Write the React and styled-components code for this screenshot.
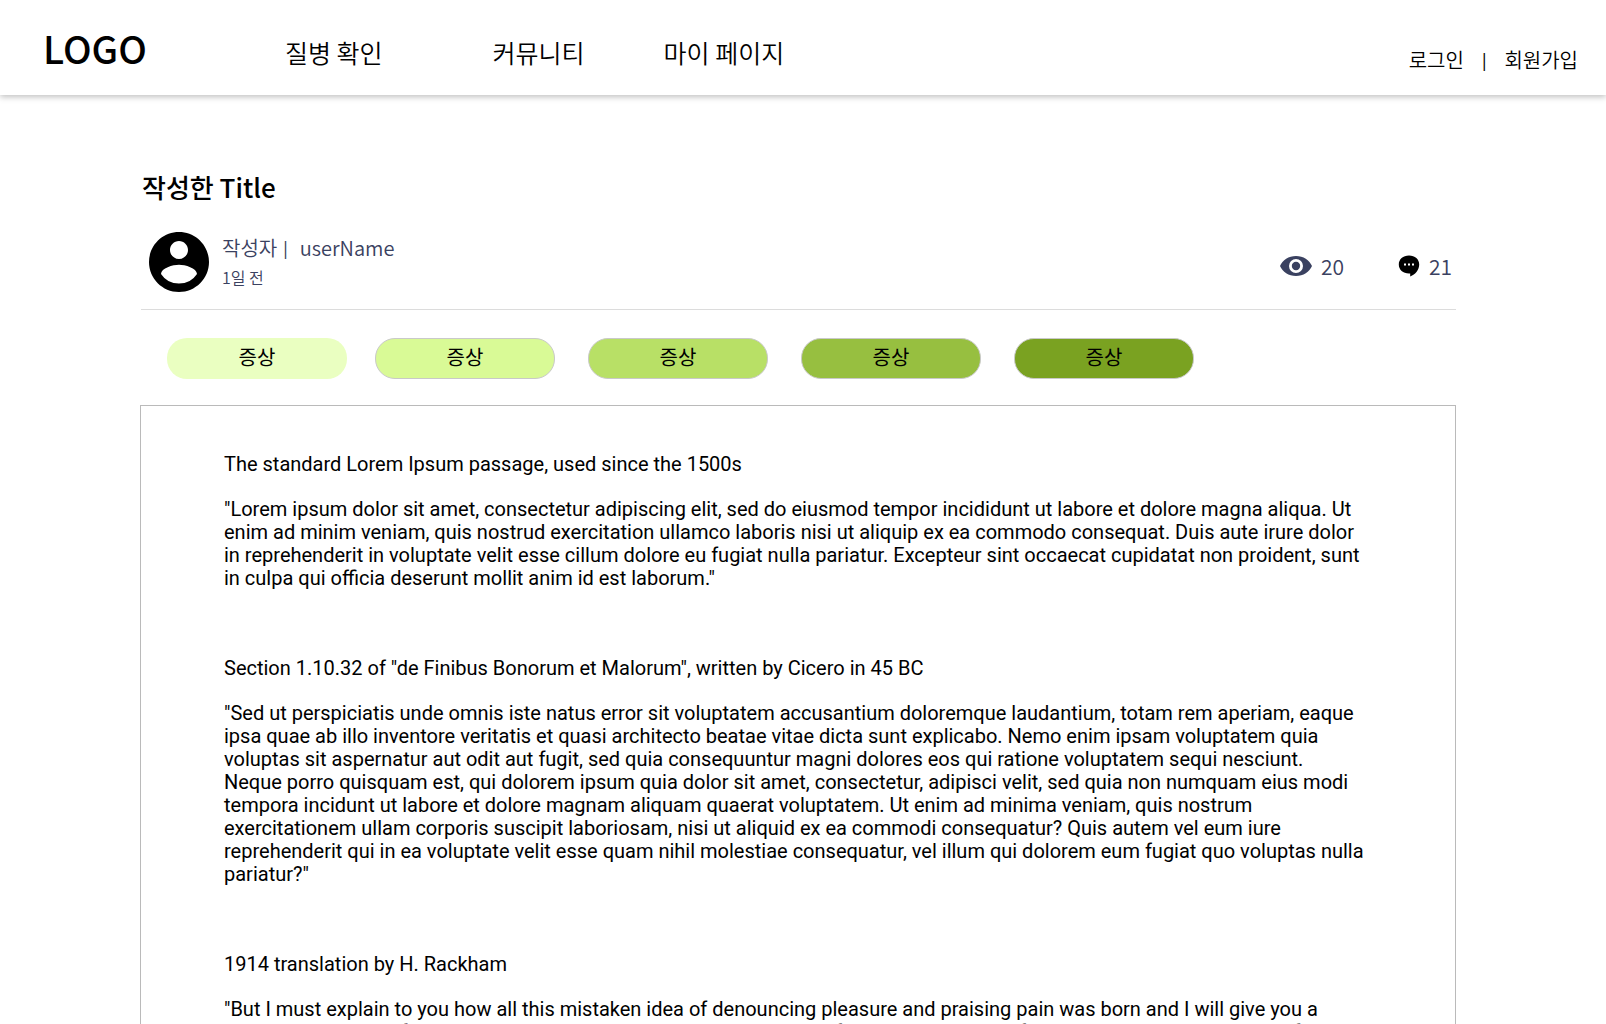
import React from "react";
import styled, { createGlobalStyle } from "styled-components";

const GlobalStyle = createGlobalStyle`
  *, *::before, *::after { box-sizing: border-box; }
  body {
    margin: 0;
    background: #fff;
    color: #000;
    font-family: "Noto Sans CJK KR", sans-serif;
    font-size: 20px;
  }
`;

const Header = styled.header`
  display: flex;
  align-items: center;
  height: 95px;
  padding: 0 28px 0 43px;
  background: #fff;
  box-shadow: 0 2px 6px rgba(0, 0, 0, 0.25);
`;

const Logo = styled.a`
  width: 242px;
  color: inherit;
  font-size: 38px;
  font-weight: 500;
  line-height: 40px;
  text-decoration: none;
`;

const Nav = styled.nav`
  display: flex;
  flex: 1;
  padding-top: 8px;
`;

const NavLink = styled.a`
  margin-right: ${(p) => p.$gap}px;
  color: inherit;
  font-size: 25px;
  font-weight: 350;
  line-height: 36px;
  text-decoration: none;
`;

const Account = styled.div`
  display: flex;
  gap: 18px;
  padding-top: 24px;
  font-weight: 350;
  line-height: 28px;
`;

const AccountLink = styled.a`
  color: inherit;
  text-decoration: none;
`;

const Divider = styled.span`
  font-size: 16px;
  font-weight: 500;
`;

const Page = styled.main`
  padding: 72px 150px 0 140px;
`;

const Title = styled.h1`
  margin: 0;
  padding-left: 2px;
  font-size: 26px;
  font-weight: 500;
  line-height: 40px;
`;

const Meta = styled.div`
  display: flex;
  align-items: center;
  height: 103px;
  margin-left: 1px;
  padding: 8px 4px 0 8px;
  border-bottom: 1px solid #dcdcdc;
  color: #3a4160;
  font-weight: 350;
`;

const Avatar = styled.svg`
  width: 60px;
  height: 60px;
  color: #000;
`;

const Byline = styled.div`
  flex: 1;
  padding-left: 13px;
`;

const Author = styled.div`
  display: flex;
  gap: 6px;
  line-height: 30px;
`;

const UserName = styled.span`
  padding-left: 6px;
`;

const Time = styled.time`
  display: block;
  font-size: 16px;
  line-height: 28px;
`;

const Stats = styled.div`
  display: flex;
  gap: 54px;
  padding-top: 8px;
  font-size: 21px;
`;

const Stat = styled.span`
  display: flex;
  align-items: center;
  gap: 9px;
  line-height: 30px;
`;

const Tags = styled.div`
  display: flex;
  padding: 28px 0 26px 27px;
`;

const Tag = styled.button`
  width: 180px;
  height: 41px;
  margin-right: ${(p) => (p.$plain ? 28 : 33)}px;
  padding: 0 0 4px;
  border: ${(p) => (p.$plain ? "0" : "1px solid #c9c9c9")};
  border-radius: 20px;
  background: ${(p) => p.$color};
  color: #000;
  font: inherit;
  line-height: 30px;
`;

const Article = styled.article`
  padding: 47px 90px 44px 83px;
  border: 1px solid #bababa;
  font-family: Roboto, sans-serif;
  line-height: 23px;
`;

const Passage = styled.section`
  margin-bottom: 67px;
`;

const Heading = styled.h2`
  margin: 0 0 22px;
  font-size: 20px;
  font-weight: 400;
`;

const Text = styled.p`
  margin: 0;
`;

const tags = [
  { color: "#eaffc1", plain: true },
  { color: "#d9fa96" },
  { color: "#b8e066" },
  { color: "#97bf40" },
  { color: "#7aa221" },
];

const passages = [
  {
    heading: "The standard Lorem Ipsum passage, used since the 1500s",
    text: '"Lorem ipsum dolor sit amet, consectetur adipiscing elit, sed do eiusmod tempor incididunt ut labore et dolore magna aliqua. Ut enim ad minim veniam, quis nostrud exercitation ullamco laboris nisi ut aliquip ex ea commodo consequat. Duis aute irure dolor in reprehenderit in voluptate velit esse cillum dolore eu fugiat nulla pariatur. Excepteur sint occaecat cupidatat non proident, sunt in culpa qui officia deserunt mollit anim id est laborum."',
  },
  {
    heading: 'Section 1.10.32 of "de Finibus Bonorum et Malorum", written by Cicero in 45 BC',
    text: '"Sed ut perspiciatis unde omnis iste natus error sit voluptatem accusantium doloremque laudantium, totam rem aperiam, eaque ipsa quae ab illo inventore veritatis et quasi architecto beatae vitae dicta sunt explicabo. Nemo enim ipsam voluptatem quia voluptas sit aspernatur aut odit aut fugit, sed quia consequuntur magni dolores eos qui ratione voluptatem sequi nesciunt. Neque porro quisquam est, qui dolorem ipsum quia dolor sit amet, consectetur, adipisci velit, sed quia non numquam eius modi tempora incidunt ut labore et dolore magnam aliquam quaerat voluptatem. Ut enim ad minima veniam, quis nostrum exercitationem ullam corporis suscipit laboriosam, nisi ut aliquid ex ea commodi consequatur? Quis autem vel eum iure reprehenderit qui in ea voluptate velit esse quam nihil molestiae consequatur, vel illum qui dolorem eum fugiat quo voluptas nulla pariatur?"',
  },
  {
    heading: "1914 translation by H. Rackham",
    text: '"But I must explain to you how all this mistaken idea of denouncing pleasure and praising pain was born and I will give you a complete account of the system, and expound the actual teachings of the great explorer of the truth, the master-builder of human happiness.',
  },
];

function EyeIcon() {
  return (
    <svg width="32" height="20" viewBox="0 0 32 20" fill="currentColor" aria-hidden="true">
      <path
        fillRule="evenodd"
        d="M16 0C8.700 0 2.500 4.100 0 10c2.500 5.900 8.700 10 16 10s13.500-4.100 16-10C29.500 4.100 23.300 0 16 0Zm0 17a7 7 0 1 1 0-14 7 7 0 0 1 0 14Zm0-11.200a4.200 4.200 0 1 0 0 8.400 4.200 4.200 0 0 0 0-8.400Z"
      />
    </svg>
  );
}

function CommentIcon() {
  return (
    <svg width="22" height="22" viewBox="0 0 22 22" aria-hidden="true">
      <path d="M11 0.500C5 0.500 0.800 4.300 0.800 9.500S5 18.500 11 18.500l1.200 0v3C17.500 19.500 21.200 14.500 21.200 9.500 21.200 4.300 17 0.500 11 0.500Z" fill="#000" />
      <path d="M6 8.500h2v2H6zM10 8.500h2v2h-2zM14 8.500h2v2h-2z" fill="#fff" />
    </svg>
  );
}

export default function App() {
  return (
    <>
      <GlobalStyle />
      <Header>
        <Logo href="#">LOGO</Logo>
        <Nav>
          <NavLink href="#" $gap={110}>질병 확인</NavLink>
          <NavLink href="#" $gap={79}>커뮤니티</NavLink>
          <NavLink href="#" $gap={0}>마이 페이지</NavLink>
        </Nav>
        <Account>
          <AccountLink href="#">로그인</AccountLink>
          <Divider>|</Divider>
          <AccountLink href="#">회원가입</AccountLink>
        </Account>
      </Header>
      <Page>
        <Title>작성한 Title</Title>
        <Meta>
          <Avatar viewBox="2 2 20 20" fill="currentColor" aria-hidden="true">
            <path d="M12 2C6.480 2 2 6.480 2 12s4.480 10 10 10 10-4.480 10-10S17.520 2 12 2zm0 3c1.660 0 3 1.340 3 3s-1.340 3-3 3-3-1.340-3-3 1.340-3 3-3zm0 14.200a7.200 7.200 0 0 1-6-3.220c.03-1.990 4-3.080 6-3.080 1.990 0 5.970 1.090 6 3.080a7.200 7.200 0 0 1-6 3.220z" />
          </Avatar>
          <Byline>
            <Author>
              <span>작성자</span>
              <Divider>|</Divider>
              <UserName>userName</UserName>
            </Author>
            <Time>1일 전</Time>
          </Byline>
          <Stats>
            <Stat><EyeIcon />20</Stat>
            <Stat><CommentIcon />21</Stat>
          </Stats>
        </Meta>
        <Tags>
          {tags.map((tag) => (
            <Tag key={tag.color} type="button" $color={tag.color} $plain={tag.plain}>증상</Tag>
          ))}
        </Tags>
        <Article>
          {passages.map((passage) => (
            <Passage key={passage.heading}>
              <Heading>{passage.heading}</Heading>
              <Text>{passage.text}</Text>
            </Passage>
          ))}
        </Article>
      </Page>
    </>
  );
}
